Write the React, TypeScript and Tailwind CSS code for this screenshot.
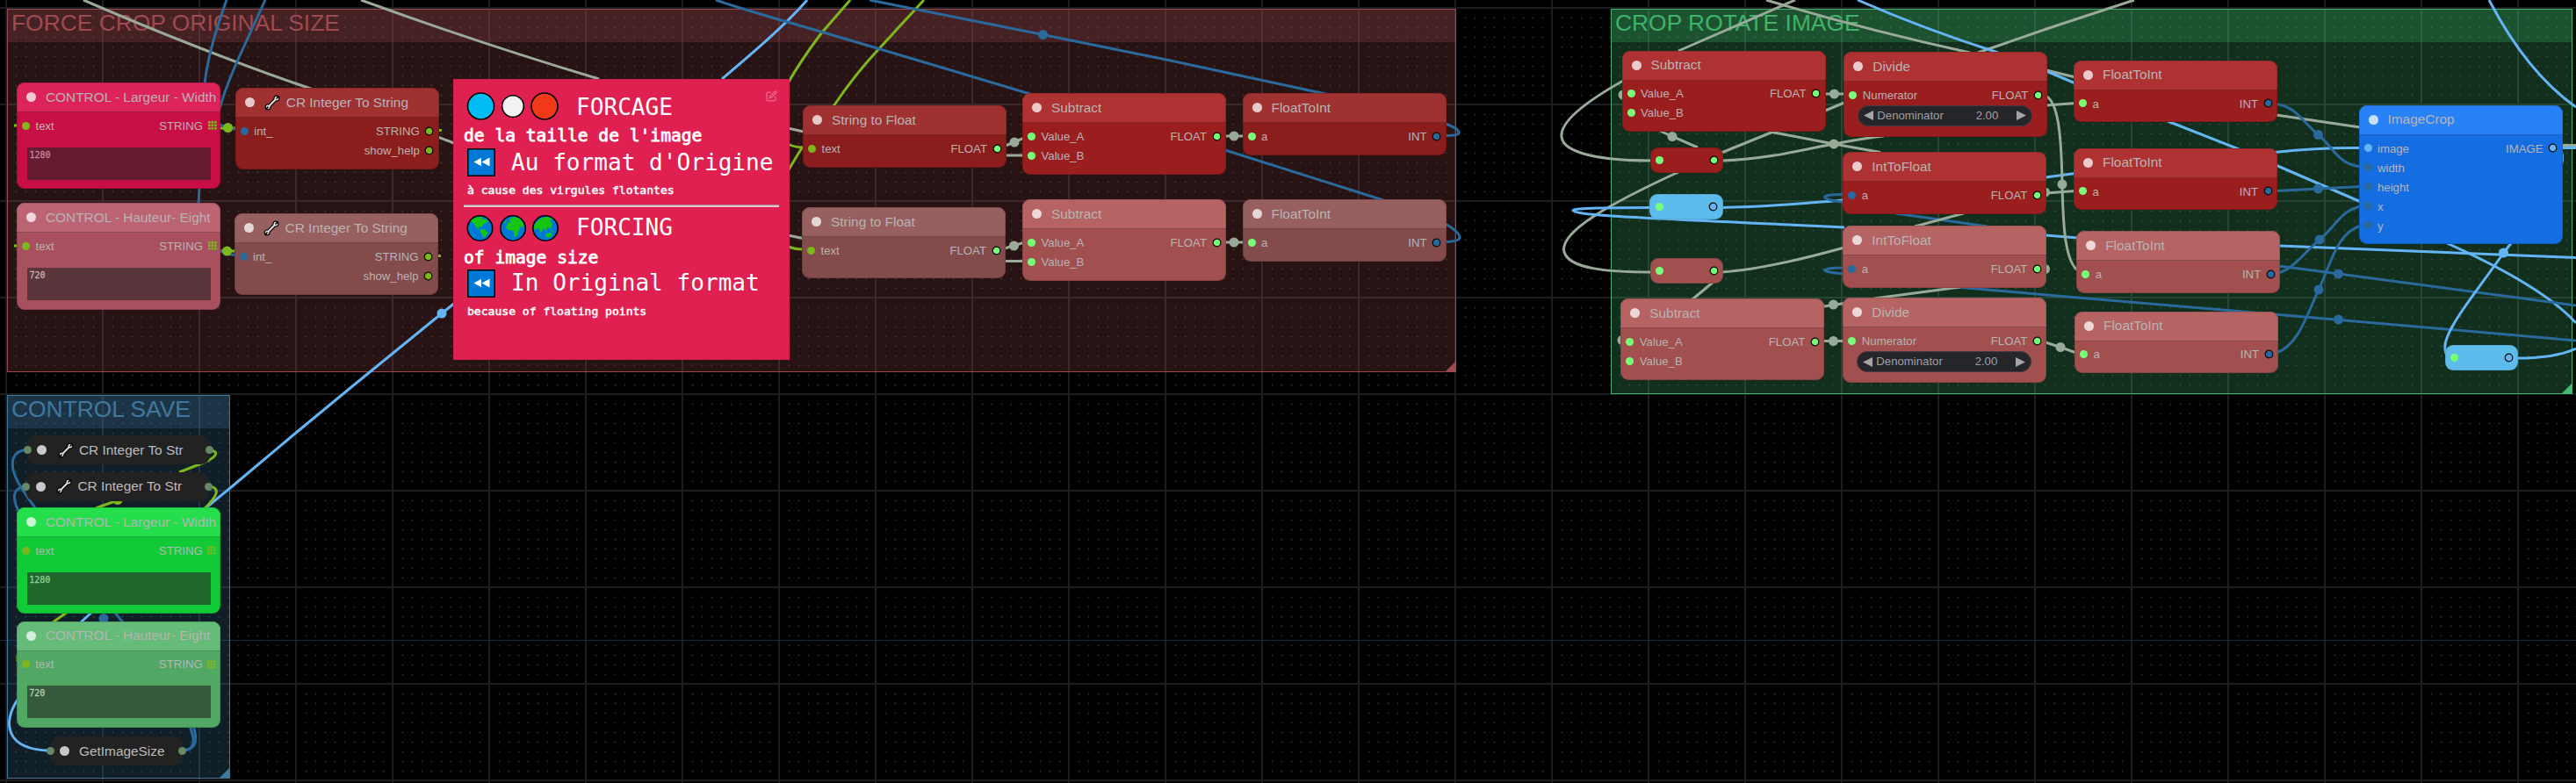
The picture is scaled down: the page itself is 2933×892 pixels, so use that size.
import type { ReactNode } from "react";

const LIME = "#7cb81b";
const MINT = "#77ff77";
const DEEP = "#29699c";
const SKY = "#64b5f6";
const SAGE = "#9aaa99";

type Slot = { name: string; color: string };

type NodeData = {
  x: number;
  y: number;
  h: number;
  title: string;
  tone: string;
  head: string;
  dot: string;
  ins?: Slot[];
  outs?: Slot[];
  wrench?: boolean;
  grid?: boolean;
  text?: { value: string; style: string; top: string };
  widget?: boolean;
};

const TONES = {
  crimson: { tone: "bg-[#c80f45]", head: "bg-[#dc235a]", dot: "bg-[#f5c8d6]" },
  rose: { tone: "bg-[#a84f60]", head: "bg-[#bc6374]", dot: "bg-[#efd8dc]" },
  maroon: { tone: "bg-[#8b1d1d]", head: "bg-[#9f3131]", dot: "bg-[#e7cbcb]" },
  dusk: { tone: "bg-[#834b4b]", head: "bg-[#975f5f]", dot: "bg-[#e5d7d7]" },
  red: { tone: "bg-[#9a1e1e]", head: "bg-[#ae3232]", dot: "bg-[#ebcbcb]" },
  salmon: { tone: "bg-[#a14f4f]", head: "bg-[#b56363]", dot: "bg-[#edd8d8]" },
  azure: { tone: "bg-[#146ee2]", head: "bg-[#2882f6]", dot: "bg-[#c9e0fd]" },
  green: { tone: "bg-[#10cb37]", head: "bg-[#24df4b]", dot: "bg-[#c8f7d2]" },
  sage: { tone: "bg-[#51a865]", head: "bg-[#65bc79]", dot: "bg-[#d8eedd]" },
};

const textIn: Slot[] = [{ name: "text", color: LIME }];
const stringOut: Slot[] = [{ name: "STRING", color: LIME }];
const intIn: Slot[] = [{ name: "int_", color: DEEP }];
const crOut: Slot[] = [
  { name: "STRING", color: LIME },
  { name: "show_help", color: LIME },
];
const floatOut: Slot[] = [{ name: "FLOAT", color: MINT }];
const valuesIn: Slot[] = [
  { name: "Value_A", color: MINT },
  { name: "Value_B", color: MINT },
];
const aFloat: Slot[] = [{ name: "a", color: MINT }];
const aInt: Slot[] = [{ name: "a", color: DEEP }];
const intOut: Slot[] = [{ name: "INT", color: DEEP }];
const numerator: Slot[] = [{ name: "Numerator", color: MINT }];

const NODES: NodeData[] = [
  { x: 19, y: 94, h: 121, title: "CONTROL - Largeur - Width", ...TONES.crimson, ins: textIn, outs: stringOut, grid: true, text: { value: "1280", style: "bg-[#651c31] text-[#cc8299]", top: "mt-[14px]" } },
  { x: 19, y: 231, h: 121.5, title: "CONTROL - Hauteur- Eight", ...TONES.rose, ins: textIn, outs: stringOut, grid: true, text: { value: "720", style: "bg-[#5a353b] text-[#ccabb1]", top: "mt-[14px]" } },
  { x: 267.8, y: 100, h: 92.5, title: "CR Integer To String", ...TONES.maroon, ins: intIn, outs: crOut, wrench: true },
  { x: 266.6, y: 243, h: 92.5, title: "CR Integer To String", ...TONES.dusk, ins: intIn, outs: crOut, wrench: true },
  { x: 914, y: 120, h: 71, title: "String to Float", ...TONES.maroon, ins: textIn, outs: floatOut },
  { x: 913, y: 236, h: 81, title: "String to Float", ...TONES.dusk, ins: textIn, outs: floatOut },
  { x: 1164, y: 106, h: 93, title: "Subtract", ...TONES.red, ins: valuesIn, outs: floatOut },
  { x: 1164, y: 227, h: 93, title: "Subtract", ...TONES.salmon, ins: valuesIn, outs: floatOut },
  { x: 1414.5, y: 106, h: 71, title: "FloatToInt", ...TONES.maroon, ins: aFloat, outs: intOut },
  { x: 1414.5, y: 227, h: 71, title: "FloatToInt", ...TONES.dusk, ins: aFloat, outs: intOut },
  { x: 1846.5, y: 57.5, h: 92.5, title: "Subtract", ...TONES.red, ins: valuesIn, outs: floatOut },
  { x: 2099.3, y: 59, h: 96.5, title: "Divide", ...TONES.red, ins: numerator, outs: floatOut, widget: true },
  { x: 2098.3, y: 173, h: 71, title: "IntToFloat", ...TONES.red, ins: aInt, outs: floatOut },
  { x: 2098.3, y: 257, h: 70.5, title: "IntToFloat", ...TONES.salmon, ins: aInt, outs: floatOut },
  { x: 1845.3, y: 340, h: 93, title: "Subtract", ...TONES.salmon, ins: valuesIn, outs: floatOut },
  { x: 2098.3, y: 339.3, h: 97, title: "Divide", ...TONES.salmon, ins: numerator, outs: floatOut, widget: true },
  { x: 2361, y: 68.7, h: 70.5, title: "FloatToInt", ...TONES.red, ins: aFloat, outs: intOut },
  { x: 2361, y: 168.7, h: 70.5, title: "FloatToInt", ...TONES.red, ins: aFloat, outs: intOut },
  { x: 2364.2, y: 263.3, h: 70.5, title: "FloatToInt", ...TONES.salmon, ins: aFloat, outs: intOut },
  { x: 2362, y: 354.5, h: 70.5, title: "FloatToInt", ...TONES.salmon, ins: aFloat, outs: intOut },
  {
    x: 2685.5, y: 119.7, h: 158.5, title: "ImageCrop", ...TONES.azure,
    ins: [
      { name: "image", color: SKY },
      { name: "width", color: DEEP },
      { name: "height", color: DEEP },
      { name: "x", color: DEEP },
      { name: "y", color: DEEP },
    ],
    outs: [{ name: "IMAGE", color: SKY }],
  },
  { x: 18.7, y: 578, h: 121, title: "CONTROL - Largeur - Width", ...TONES.green, ins: textIn, outs: stringOut, grid: true, text: { value: "1280", style: "bg-[#1f662b] text-[#8ccf98]", top: "mt-[14px]" } },
  { x: 18.7, y: 707.5, h: 121, title: "CONTROL - Hauteur- Eight", ...TONES.sage, ins: textIn, outs: stringOut, grid: true, text: { value: "720", style: "bg-[#35593c] text-[#b0d0b6]", top: "mt-[13.5px]" } },
];

const LINKS: [string, string][] = [
  [SAGE, "M95 0C180 37 280 76 348 99S500 157 517 163"],
  [SAGE, "M411 0Q545 49 682 90"],
  [DEEP, "M258 0Q237 58 233 96"],
  [DEEP, "M227 213L226 233"],
  [DEEP, "M302 0L270 70Q256 102 250 124"],
  [LIME, "M250 146H269"],
  [DEEP, "M250 141.500C256 145 260 147 269 147"],
  [LIME, "M250 286H268"],
  [DEEP, "M250 285.500C256 288 260 290.500 268 290.500"],
  [LIME, "M16 143H21"],
  [LIME, "M16 280H21"],
  [LIME, "M498 148.500H503"],
  [LIME, "M497 291.500H502"],
  [SKY, "M919 0C893 30 855 62 822 90"],
  [SKY, "M518 345L503 357L400 441L337 493L262 556L234 579"],
  [LIME, "M968 0L935 38Q911 70 897 95"],
  [LIME, "M1052 0L999.500 57Q974 84 949 121"],
  [LIME, "M897 164Q905 168 915 168"],
  [LIME, "M914 167Q907 178 897 195"],
  [LIME, "M897 281Q905 284 914 284"],
  [SAGE, "M897 146L915 150"],
  [SAGE, "M897 268L914 271.500"],
  [DEEP, "M815 0C850 12 880 20 900 26Q1000 55 1176 108"],
  [DEEP, "M1395 171L1575 228"],
  [DEEP, "M1646 255C1662 265 1672 275 1646 275.500"],
  [DEEP, "M990 0L1187.500 39.500L1328 68L1514 108"],
  [DEEP, "M1646 141C1662 147 1670 155 1646 154.500"],
  [SAGE, "M1145 166L1165 157.500"],
  [SAGE, "M1145 177H1165"],
  [SAGE, "M1144 283L1165 276.500"],
  [SAGE, "M1144 297.500H1165"],
  [SAGE, "M1395 155H1416"],
  [SAGE, "M1395 276H1416"],
  [SAGE, "M2044 0L1911 58"],
  [SAGE, "M1848 92C1800 119 1776 140 1778 156C1780 176 1829 183 1880 183"],
  [SAGE, "M2011 0Q2120 33 2243 60"],
  [SAGE, "M2330 80L2363 88"],
  [SAGE, "M2592 131L2687 145"],
  [SAGE, "M2430 0L2330 33L2252 60"],
  [SAGE, "M2101 116.500L2077 126.500"],
  [SAGE, "M2019 150L1960 174"],
  [SAGE, "M1911 196C1835 231 1775 264 1781 287C1786 306 1830 310 1880 310"],
  [SKY, "M2115 0Q2190 33 2275 60"],
  [SKY, "M2330 81L2363 95"],
  [SKY, "M2468 138L2549 170"],
  [SKY, "M2591 188L2688 230"],
  [SKY, "M2786 277Q2895 326 2933 368"],
  [SAGE, "M1960 183C2010 182 2060 169 2088 164S2125 157 2145 155"],
  [SAGE, "M2015 150L2088 164L2141 173.500"],
  [SAGE, "M1890 149L1904 155.500L1933 168"],
  [SAGE, "M2077 107H2101"],
  [SKY, "M1880 236.500C1835 236.500 1791 237 1791 239.500C1793 246 1870 248 2100 259"],
  [SKY, "M2329 268L2366 271L2595 280L2933 293.500"],
  [SKY, "M1960 236.500C2010 236 2060 231 2100 228"],
  [SKY, "M2329 202L2363 197.500"],
  [SKY, "M2590 173.500Q2640 168 2687 168.500"],
  [DEEP, "M2100 221.500C2070 221 2070 227 2100 230.500"],
  [DEEP, "M2158 243L2263 258"],
  [DEEP, "M2100 305C2070 305 2070 310 2100 312"],
  [DEEP, "M2228 327L2330 336L2595 358.500L2933 388"],
  [DEEP, "M2595 303L2663 312L2933 348"],
  [SAGE, "M2236 243L2180 258"],
  [SAGE, "M2100 282Q2010 307 1960 310"],
  [SAGE, "M1951 321L1927 341"],
  [SAGE, "M2232 327L2134 340"],
  [SAGE, "M2100 345.500L2077 349"],
  [SAGE, "M2076 388.500H2100"],
  [SAGE, "M2329 109C2343 116 2347 150 2348 210C2349 262 2352 300 2367 309"],
  [SAGE, "M2330 120L2363 117.500"],
  [SAGE, "M2330 220L2363 217.500"],
  [SAGE, "M2329 390L2346 395.500L2364 402"],
  [DEEP, "M2591 118.500C2614 121 2622 139 2639.500 153.500S2662 187 2688 190"],
  [DEEP, "M2591 217.500L2639.500 215L2688 212.500"],
  [DEEP, "M2594 311C2612 306 2622 289 2641 273S2665 240 2688 235"],
  [DEEP, "M2592 402C2617 393 2626 360 2640 330S2661 265 2688 257"],
  [SAGE, "M2915 165.500H2933"],
  [SKY, "M2915 168.500H2933"],
  [SKY, "M2914 168Q2920 176 2916 190"],
  [SKY, "M2860 276L2850.500 288C2825 326 2780 378 2784 398Q2785 407 2792 408"],
  [SKY, "M2865 408C2895 408 2918 404 2933 397"],
  [SKY, "M2834 0C2858 46 2889 91 2933 122"],
  [DEEP, "M31 512.500C13 513 11 528 18 544S34 569 41 580"],
  [DEEP, "M30 554C15 555 13 566 21 582"],
  [LIME, "M238 512.500C250 514 248 520 232 527L204 538"],
  [LIME, "M237 554C252 555 248 565 232 580"],
  [LIME, "M139 570L132 570.500L109 579"],
  [LIME, "M77 697L60 709"],
  [LIME, "M20 747V754"],
  [SKY, "M105 697L92 709"],
  [DEEP, "M130 697L140 709"],
  [SKY, "M20 797C4 822 4 854 57 855"],
  [DEEP, "M206 855C222 855 223 845 216 827"],
  [DEEP, "M210 855C224 853 225 842 220 827"],
];

const JOINTS: [string, number, number][] = [
  [LIME, 259.5, 145.5],
  [LIME, 258.5, 286],
  [SKY, 503, 357],
  [DEEP, 1187.5, 39.5],
  [SAGE, 1155, 162],
  [SAGE, 1154.5, 280],
  [SAGE, 1405, 155],
  [SAGE, 1405, 276],
  [SAGE, 1848, 108],
  [SAGE, 1847, 387.5],
  [SAGE, 2088.5, 107],
  [SAGE, 2088, 164],
  [SAGE, 1904, 155.5],
  [SAGE, 2087.5, 347],
  [SAGE, 2087.5, 388.5],
  [SAGE, 2348, 210],
  [SAGE, 2328.5, 219],
  [SAGE, 2328.5, 306.5],
  [SAGE, 2346, 395.5],
  [DEEP, 2639.5, 153.5],
  [DEEP, 2639.5, 215],
  [DEEP, 2641, 273],
  [DEEP, 2640, 330],
  [DEEP, 2662.5, 312],
  [DEEP, 2662.5, 364],
  [SKY, 2850.5, 288],
  [LIME, 134, 569.5],
  [DEEP, 118, 704.5],
];

function Grid() {
  const cross: string[] = [];
  for (let r = 1; r < 10; r++) {
    for (let c = 1; c < 10; c++) {
      cross.push(`M${c * 11} ${r * 11 + 1.5}h3M${c * 11 + 1.5} ${r * 11}v3`);
    }
  }
  return (
    <svg className="absolute inset-0" width="2933" height="892">
      <defs>
        <pattern id="cells" x="6" y="8" width="110" height="110" patternUnits="userSpaceOnUse">
          <path d="M0 0H110V2H2V110H0Z" fill="#1c1e22" />
          <path d={cross.join("")} stroke="#1a1c1f" strokeWidth="1" />
        </pattern>
      </defs>
      <rect width="2933" height="892" fill="#000" />
      <rect width="2933" height="892" fill="url(#cells)" />
      <path d="M0 729.500H2933" stroke="#1b2a48" />
    </svg>
  );
}

function Links() {
  return (
    <svg className="absolute inset-0" width="2933" height="892" fill="none" strokeWidth="3">
      {LINKS.map(([color, d]) => (
        <path key={d} d={d} stroke={color} />
      ))}
      {JOINTS.map(([color, x, y]) => (
        <circle key={`${x}-${y}`} cx={x} cy={y} r="5.500" fill={color} />
      ))}
    </svg>
  );
}

function Group({ place, title, frame, head, corner }: { place: string; title: string; frame: string; head: string; corner: string }) {
  return (
    <section className={`absolute flex flex-col justify-between border ${place} ${frame}`}>
      <h2 className={`flex h-[37px] items-center whitespace-nowrap pl-1 text-[26.4px] leading-none ${head}`}>
        <span className="-mt-[6px]">{title}</span>
      </h2>
      <svg className="self-end" width="11" height="11">
        <path d="M11 0V11H0Z" className={corner} />
      </svg>
    </section>
  );
}

function Wrench() {
  return (
    <svg width="18" height="18" viewBox="0 0 19 19" className="shrink-0">
      <g strokeLinecap="round">
        <path d="M5 14.200L14 5" stroke="#000" strokeWidth="4.600" />
        <circle cx="4.300" cy="14.700" r="3.700" fill="#000" />
        <circle cx="14.700" cy="4.300" r="3.700" fill="#000" />
        <circle cx="4.400" cy="14.600" r="2.500" fill="#dcdcdc" />
        <circle cx="14.600" cy="4.400" r="2.500" fill="#dcdcdc" />
        <path d="M5 14.200L14 5" stroke="#dcdcdc" strokeWidth="2.200" />
        <path d="M4.200 14.900L2 17.100M14.900 4.200L17.100 2" stroke="#000" strokeWidth="1.700" />
      </g>
    </svg>
  );
}

function GridPort() {
  return (
    <svg width="10" height="10" className="-mr-px shrink-0">
      {[0, 1, 2].map((r) => [0, 1, 2].map((c) => <rect key={`${r}${c}`} x={c * 3.5} y={r * 3.5} width="2.600" height="2.600" fill={LIME} />))}
    </svg>
  );
}

function Port({ color, ring }: { color: string; ring?: boolean }) {
  return (
    <svg width="11" height="11" className="shrink-0">
      <circle cx="5.500" cy="5.500" r={ring ? 4.3 : 4.5} fill={color} stroke={ring ? "#0a0a0a" : "none"} strokeWidth="1.200" />
    </svg>
  );
}

function Denominator() {
  return (
    <div className="ml-4 mt-px flex h-[23.5px] w-[199px] items-center rounded-full border border-[#4a3a3e] bg-[#25252a] pl-[6px] pr-[6px] text-[13.2px] leading-none text-[#a0a0a3]">
      <svg width="11" height="11"><path d="M11 0V11L0 5.500Z" fill="#a5a5a8" /></svg>
      <span className="ml-1">Denominator</span>
      <span className="ml-auto mr-[21px]">2.00</span>
      <svg width="11" height="11"><path d="M0 0V11L11 5.500Z" fill="#a5a5a8" /></svg>
    </div>
  );
}

function GraphNode({ n }: { n: NodeData }) {
  const ins = n.ins ?? [];
  const outs = n.outs ?? [];
  return (
    <article
      className={`absolute w-[232px] overflow-hidden rounded-[9px] text-[#b7b4b4] ${n.tone}`}
      style={{ left: n.x, top: n.y, height: n.h }}
    >
      <header className={`flex h-[34px] items-center whitespace-nowrap border-b border-black/25 pl-[11px] text-[15.4px] leading-none ${n.head}`}>
        <span className={`size-[11px] shrink-0 rounded-full ${n.dot}`} />
        {n.wrench ? (
          <span className="ml-[11.5px] mr-[6.5px]">
            <Wrench />
          </span>
        ) : (
          <span className="w-[11px] shrink-0" />
        )}
        <span>{n.title}</span>
      </header>
      <div className="flex justify-between px-[5px] pt-1 text-[13.2px] leading-none">
        <ul>
          {ins.map((s) => (
            <li key={s.name} className="flex h-[22px] items-center gap-[5.5px]">
              <Port color={s.color} />
              <span className="pt-px">{s.name}</span>
            </li>
          ))}
        </ul>
        <ul>
          {outs.map((s) => (
            <li key={s.name} className="flex h-[22px] items-center justify-end gap-[5.5px] pr-[0.5px]">
              <span className="pt-px">{s.name}</span>
              {n.grid ? <GridPort /> : <Port color={s.color} ring />}
            </li>
          ))}
        </ul>
      </div>
      {n.widget && <Denominator />}
      {n.text && (
        <div className={`ml-3 h-[37px] w-[209px] pl-[2.5px] pt-[3px] font-['DejaVu_Sans_Mono',monospace] text-[10px] leading-[12px] [-webkit-text-stroke:0.3px] ${n.text.style} ${n.text.top}`}>
          {n.text.value}
        </div>
      )}
      <div className="pointer-events-none absolute inset-0 rounded-[9px] border border-black/15" />
    </article>
  );
}

function Reroute({ place, color, out }: { place: string; color: string; out: string }) {
  return (
    <div className={`absolute flex h-[29px] w-[83.5px] items-center justify-between rounded-[9px] border border-black/10 px-[4.5px] ${place} ${color}`}>
      <Port color={MINT} />
      <Port color={out} ring />
    </div>
  );
}

function Collapsed({ place, title, wrench }: { place: string; title: string; wrench?: boolean }) {
  return (
    <div className={`absolute flex h-[33px] items-center whitespace-nowrap rounded-[10px] bg-[#222] text-[15.4px] leading-none text-[#bbb] ${place}`}>
      <span className="-ml-[4.5px] size-[9px] shrink-0 rounded-full bg-[#668866]" />
      <span className="ml-[6.5px] size-[11px] shrink-0 rounded-full bg-[#c8c8c8]" />
      {wrench ? (
        <span className="ml-[12.5px] mr-[6.5px]">
          <Wrench />
        </span>
      ) : (
        <span className="w-[11px] shrink-0" />
      )}
      <span>{title}</span>
      <span className="-mr-[4px] ml-auto size-[9px] shrink-0 rounded-full bg-[#668866]" />
    </div>
  );
}

function Rewind() {
  return (
    <svg width="32" height="32" className="ml-[3.5px] shrink-0">
      <rect x="0.750" y="0.750" width="30.500" height="30.500" fill="#0078d7" stroke="#000" strokeWidth="1.600" />
      <path d="M7.500 15.500L16 10.800V20.200ZM16.500 15.500L25.500 10.500V20.500Z" fill="#fff" />
    </svg>
  );
}

function Line({ className, children }: { className: string; children: ReactNode }) {
  return <div className={`flex items-center whitespace-pre leading-none ${className}`}>{children}</div>;
}

function Note() {
  return (
    <article className="absolute left-[516px] top-[90px] flex h-[320px] w-[382.500px] flex-col border border-[#cf1f4c] bg-[#df2050] pl-[11px] pt-[11px] font-['DejaVu_Sans_Mono',monospace] text-white">
      <Line className="h-[38px] text-[26.1px]">
        <svg width="112" height="34" className="shrink-0" stroke="#000" strokeWidth="1.600">
          <circle cx="19.500" cy="17" r="15" fill="#00bcf2" />
          <circle cx="56" cy="17" r="12.300" fill="#f2f2f2" />
          <circle cx="92" cy="17" r="15" fill="#f03a17" />
        </svg>
        <span className="ml-[16px] pt-[2px]">FORCAGE</span>
      </Line>
      <Line className="h-[29px] text-[19.6px] [-webkit-text-stroke:0.8px]">de la taille de l'image</Line>
      <Line className="h-[31px] text-[26.1px]">
        <Rewind />
        <span className="ml-[18.500px] pt-px">Au format d'Origine</span>
      </Line>
      <Line className="h-[33px] pl-1 text-[13.05px] [-webkit-text-stroke:0.5px]">à cause des virgules flotantes</Line>
      <div className="h-[3px] w-[359px] border-t border-[#9a8a8e] bg-[#e9c3cd]" />
      <Line className="h-[46px] text-[26.1px]">
        <svg width="112" height="34" className="shrink-0">
          <g fill="#0078d7" stroke="#000" strokeWidth="1.600">
            <circle cx="18.500" cy="18" r="14.200" />
            <circle cx="56" cy="18" r="14.200" />
            <circle cx="93" cy="18" r="14.200" />
          </g>
          <g fill="#16c60c">
            <path d="M9 8.500L14 5.500L22 5L20 7L25 8L28.500 10L25 12L22 14L20 17L17 15.500L18 20L14 17L11 12L8 10ZM19 19L24 19.500L27.500 23L25 27L22 29L20.500 24L18.500 22Z" />
            <path d="M51 8L58 5L64 7L67.500 12L68.500 17L64.500 16L63 20L61 26L58 28.500L56.500 21L51 20L48 17L50 12L54 10.500ZM45 12L49 8.500L48 12Z" />
            <path d="M82 12L87 7L95 5L102 7.500L98 9L101 13L99 18L95 17L94 22L91 18L88 23L85 18L80.500 20L80 16ZM94 24L99 23L101 26L97 29L93 27ZM98 20L102 21L103 23Z" />
          </g>
        </svg>
        <span className="ml-[16px] pt-px">FORCING</span>
      </Line>
      <Line className="h-[24px] text-[19.6px] [-webkit-text-stroke:0.8px]">of image size</Line>
      <Line className="h-[33px] text-[26.1px]">
        <Rewind />
        <span className="ml-[18.500px]">In Original format</span>
      </Line>
      <Line className="h-[31px] pl-1 text-[13.05px] [-webkit-text-stroke:0.5px]">because of floating points</Line>
      <svg className="absolute right-[13px] top-[12px]" width="13" height="13" viewBox="0 0 24 24" fill="none" stroke="#ea6a8c" strokeWidth="2.400">
        <path d="M11 4H4a2 2 0 0 0-2 2v14a2 2 0 0 0 2 2h14a2 2 0 0 0 2-2v-7" />
        <path d="M18.500 2.500a2.120 2.120 0 0 1 3 3L12 15l-4 1 1-4Z" />
      </svg>
    </article>
  );
}

export default function App() {
  return (
    <main className="relative h-[892px] w-[2933px] overflow-hidden bg-black font-['Liberation_Sans',Arial,sans-serif]">
      <Grid />
      <Group
        place="left-[8px] top-[10px] h-[413.500px] w-[1650px]"
        title="FORCE CROP ORIGINAL SIZE"
        frame="border-[#9a474d] bg-[#9f4a50]/25"
        head="bg-[#9f4a50]/25 text-[#9f4a50]"
        corner="fill-[#9f4a50]"
      />
      <Group
        place="left-[1834px] top-[10px] h-[439px] w-[1095px]"
        title="CROP ROTATE IMAGE"
        frame="border-[#3fb468] bg-[#44bc6e]/25"
        head="bg-[#44bc6e]/25 text-[#3fb468]"
        corner="fill-[#44bc6e]"
      />
      <Group
        place="left-[8px] top-[450px] h-[436.500px] w-[254px]"
        title="CONTROL SAVE"
        frame="border-[#3f789e] bg-[#3f789f]/25"
        head="bg-[#3f789f]/25 text-[#3f789f]"
        corner="fill-[#3f789f]"
      />
      <Links />
      <Collapsed place="left-[31px] top-[496px] w-[208px]" title="CR Integer To Str" wrench />
      <Collapsed place="left-[29.500px] top-[537.500px] w-[208px]" title="CR Integer To Str" wrench />
      <Collapsed place="left-[57px] top-[839px] w-[150.500px]" title="GetImageSize" />
      {NODES.map((n) => (
        <GraphNode key={`${n.x}-${n.y}`} n={n} />
      ))}
      <Reroute place="left-[1878.500px] top-[168px]" color="bg-[#9a1e1e]" out={MINT} />
      <Reroute place="left-[1878px] top-[221px]" color="bg-[#5ebcec]" out={SKY} />
      <Reroute place="left-[1878.500px] top-[294px]" color="bg-[#a14f4f]" out={MINT} />
      <Reroute place="left-[2783.500px] top-[393px]" color="bg-[#5ebcec]" out={SKY} />
      <Note />
    </main>
  );
}
